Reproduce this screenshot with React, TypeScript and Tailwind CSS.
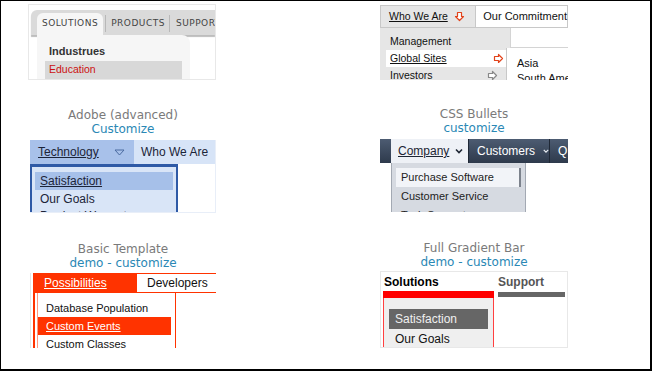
import React from 'react';

const sans = { fontFamily: '"Liberation Sans", Arial, sans-serif' };
const verdana = { fontFamily: '"DejaVu Sans", Verdana, sans-serif' };

function DownArrow({ color }: { color: string }) {
  return (
    <svg width="11" height="11" viewBox="0 0 11 11">
      <path d="M3.5 1.5h4v4h2l-4 4-4-4h2z" fill="white" stroke={color} strokeWidth="1.2" strokeLinejoin="round" />
    </svg>
  );
}

function RightArrow({ color }: { color: string }) {
  return (
    <svg width="11" height="11" viewBox="0 0 11 11">
      <path d="M1.5 3.5v4h4v2l4-4-4-4v2z" fill="white" stroke={color} strokeWidth="1.2" strokeLinejoin="round" />
    </svg>
  );
}

function Caret({ color }: { color: string }) {
  return (
    <svg width="8" height="6" viewBox="0 0 8 6">
      <path d="M1 1.5l3 3 3-3" fill="none" stroke={color} strokeWidth="1.6" />
    </svg>
  );
}

function Label({ title, link }: { title: string; link: string }) {
  return (
    <div className="text-center text-[12px] leading-[14px]" style={verdana}>
      <div className="text-[#7a7a7a]">{title}</div>
      <div className="text-[#2a88b5]">{link}</div>
    </div>
  );
}

// Tile 1 - tabbed gray menu
function TabsTile() {
  return (
    <div className="w-[188px] h-[76px] -ml-[2px] border border-[#e8e8e8] bg-white overflow-hidden pt-[5px] pl-[2px]">
      <div className="h-[25px] bg-[#dadada] rounded-tl-[6px] flex items-end pl-[6px] shadow-[0_2px_1px_#bdbdbd] text-[9px] tracking-[0.5px] text-[#444]" style={verdana}>
        <div className="h-[22px] bg-[#f6f6f6] rounded-t-[6px] px-[5px] flex items-center">SOLUTIONS</div>
        <div className="h-[17px] mb-[3px] ml-[2px] border-l border-[#b8b8b8] pl-[5px] pr-[4px] flex items-center">PRODUCTS</div>
        <div className="h-[17px] mb-[3px] border-l border-[#b8b8b8] pl-[6px] flex items-center whitespace-nowrap">SUPPORT</div>
      </div>
      <div className="ml-[6px] w-[153px] h-[60px] bg-[#f6f6f6] rounded-tr-[8px] pt-[8px] px-[8px]" style={sans}>
        <div className="font-bold text-[11px] text-[#333] h-[17px] flex items-center pl-[4px]">Industrues</div>
        <div className="bg-[#d8d8d8] h-[18px] mt-[1px] flex items-center pl-[4px] text-[10.5px] text-[#cc1111]">Education</div>
      </div>
    </div>
  );
}

// Tile 2 - Who We Are gray menu with flyout
function WhoTile() {
  return (
    <div className="w-[188px] h-[75px] mt-[1px] overflow-hidden bg-white text-[10.5px] text-[#111]" style={sans}>
      <div className="flex h-[23px]">
        <div className="w-[105px] bg-[#e6e6e6] border border-[#c8c8c8] flex items-center justify-between pl-[8px] pr-[10px]">
          <span className="underline">Who We Are</span>
          <DownArrow color="#e2431b" />
        </div>
        <div className="flex-1 border-y border-r border-[#c8c8c8] flex items-center pl-[7px] whitespace-nowrap text-[11px]">Our Commitment</div>
      </div>
      <div className="flex h-[52px]">
        <div className="w-[134px] bg-[#e6e6e6] pt-[6px]">
          <div className="h-[16px] flex items-center pl-[10px]">Management</div>
          <div className="h-[17px] ml-[6px] w-[124px] bg-white flex items-center justify-between pl-[4px] pr-[6px]">
            <span className="underline">Global Sites</span>
            <RightArrow color="#e2431b" />
          </div>
          <div className="h-[17px] flex items-center justify-between pl-[10px] pr-[12px]">
            <span>Investors</span>
            <RightArrow color="#888" />
          </div>
        </div>
        <div className="flex-1 flex flex-col border-l border-[#d4d4d4]">
          <div className="h-[20px] shrink-0 border-b border-[#d4d4d4] border-r" />
          <div className="-ml-[5px] flex-1 bg-white border-l border-[#c8c8c8] pl-[10px] pt-[8px] text-[11px]">
            <div className="h-[15px] flex items-center">Asia</div>
            <div className="h-[15px] flex items-center whitespace-nowrap">South America</div>
          </div>
        </div>
      </div>
    </div>
  );
}

// Tile 3 - Adobe blue menu
function AdobeTile() {
  return (
    <div className="w-[186px] h-[73px] overflow-hidden bg-white border-r border-b border-[#e8eef8] text-[12px] text-[#1c2438]" style={sans}>
      <div className="flex h-[24px]">
        <div className="w-[104px] bg-[#a8c1ea] flex items-center justify-between pl-[8px] pr-[9px]">
          <span className="underline">Technology</span>
          <svg width="11" height="7" viewBox="0 0 11 7">
            <path d="M1 1h9l-4.5 5z" fill="none" stroke="#4a6aa0" strokeWidth="1" />
          </svg>
        </div>
        <div className="flex-1 bg-[#d7e4f7] flex items-center pl-[7px] whitespace-nowrap">Who We Are</div>
      </div>
      <div className="w-[148px] h-[60px] border-x-2 border-t-[3px] border-[#2f5aa6] bg-[#d9e5f7] px-[3px] pt-[5px]">
        <div className="h-[18px] bg-[#a6c0e9] flex items-center pl-[5px]"><span className="underline">Satisfaction</span></div>
        <div className="h-[17px] flex items-center pl-[5px]">Our Goals</div>
        <div className="h-[17px] flex items-center pl-[5px]">Product Warranty</div>
      </div>
    </div>
  );
}

// Tile 4 - CSS bullets dark bar
function BulletsTile() {
  return (
    <div className="w-[188px] h-[73px] overflow-hidden bg-white" style={sans}>
      <div className="flex h-[24px] bg-gradient-to-b from-[#4d5c72] to-[#2e3a4c] text-[12px] text-white">
        <div className="w-[11px]" />
        <div className="w-[77px] bg-[#eef1f6] text-[#1d2533] flex items-center pl-[7px] gap-[6px]">
          <span className="underline">Company</span>
          <Caret color="#1d2533" />
        </div>
        <div className="w-[81px] border-l border-[#1f2836] flex items-center pl-[8px] gap-[8px]">
          <span>Customers</span>
          <Caret color="#e8ecf2" />
        </div>
        <div className="flex-1 border-l border-[#1f2836] flex items-center pl-[8px]">Q</div>
      </div>
      <div className="ml-[11px] w-[135px] h-[49px] bg-[#d6dae1] border-x border-[#a3a9b3] px-[4px] pt-[5px] text-[11px] text-[#222]">
        <div className="h-[19px] bg-[#f2f4f8] border-r-2 border-[#7c828c] flex items-center pl-[5px]">Purchase Software</div>
        <div className="h-[19px] flex items-center pl-[5px]">Customer Service</div>
        <div className="h-[19px] flex items-center pl-[5px]">Tech Support</div>
      </div>
    </div>
  );
}

// Tile 5 - basic red template
function BasicTile() {
  return (
    <div className="w-[186px] h-[75px] overflow-hidden bg-white border-l border-[#e6e6e6] pl-[2px]" style={sans}>
      <div className="h-full border-l-2 border-t border-[#ff3300]">
        <div className="flex h-[19px] border-b border-[#ff3300] text-[12px]">
          <div className="w-[102px] bg-[#ff3300] text-white flex items-center pl-[9px]"><span className="underline">Possibilities</span></div>
          <div className="flex-1 flex items-center pl-[10px] text-[#111]">Developers</div>
        </div>
        <div className="ml-[2px] w-[139px] h-[60px] border-l border-[#ff9980] border-r border-r-[#ff3300] pt-[6px] text-[11px] text-[#111]">
          <div className="h-[18px] flex items-center pl-[8px]">Database Population</div>
          <div className="h-[18px] w-[133px] bg-[#ff3300] text-white flex items-center pl-[8px]"><span className="underline">Custom Events</span></div>
          <div className="h-[18px] flex items-center pl-[8px]">Custom Classes</div>
        </div>
      </div>
    </div>
  );
}

// Tile 6 - full gradient bar
function GradientTile() {
  return (
    <div className="w-[188px] h-[77px] -mt-[1px] overflow-hidden bg-white border border-[#e8e8e8] px-[2px]" style={sans}>
      <div className="flex h-[19px] text-[12px] font-bold">
        <div className="w-[111px] flex items-center pl-[1px] text-black">Solutions</div>
        <div className="flex-1 flex items-center pl-[4px] text-[#555]">Support</div>
      </div>
      <div className="flex h-[7px]">
        <div className="w-[111px] bg-[#ff0000]" />
        <div className="flex-1 ml-[4px] mt-[1px] h-[5px] bg-[#666]" />
      </div>
      <div className="w-[111px] h-[60px] border-x border-[#ff4040] bg-[#efefef] px-[5px] pt-[11px] text-[12px]">
        <div className="h-[20px] bg-[#666] text-[#f0f0f0] flex items-center pl-[6px]">Satisfaction</div>
        <div className="h-[20px] flex items-center pl-[6px] text-[#111]">Our Goals</div>
      </div>
    </div>
  );
}

export default function App() {
  return (
    <div className="w-[652px] h-[371px] bg-white border-t border-l border-r-2 border-b-2 border-black overflow-hidden">
      <div className="flex pl-[29px] pt-[3px] gap-[164px]">
        <div className="w-[186px] flex flex-col">
          <TabsTile />
          <div className="h-[28px]" />
          <Label title="Adobe (advanced)" link="Customize" />
          <div className="h-[4px]" />
          <AdobeTile />
          <div className="h-[29px]" />
          <Label title="Basic Template" link="demo - customize" />
          <div className="h-[3px]" />
          <BasicTile />
        </div>
        <div className="w-[188px] flex flex-col">
          <WhoTile />
          <div className="h-[27px]" />
          <Label title="CSS Bullets" link="customize" />
          <div className="h-[4px]" />
          <BulletsTile />
          <div className="h-[29px]" />
          <Label title="Full Gradient Bar" link="demo - customize" />
          <div className="h-[3px]" />
          <GradientTile />
        </div>
      </div>
    </div>
  );
}
